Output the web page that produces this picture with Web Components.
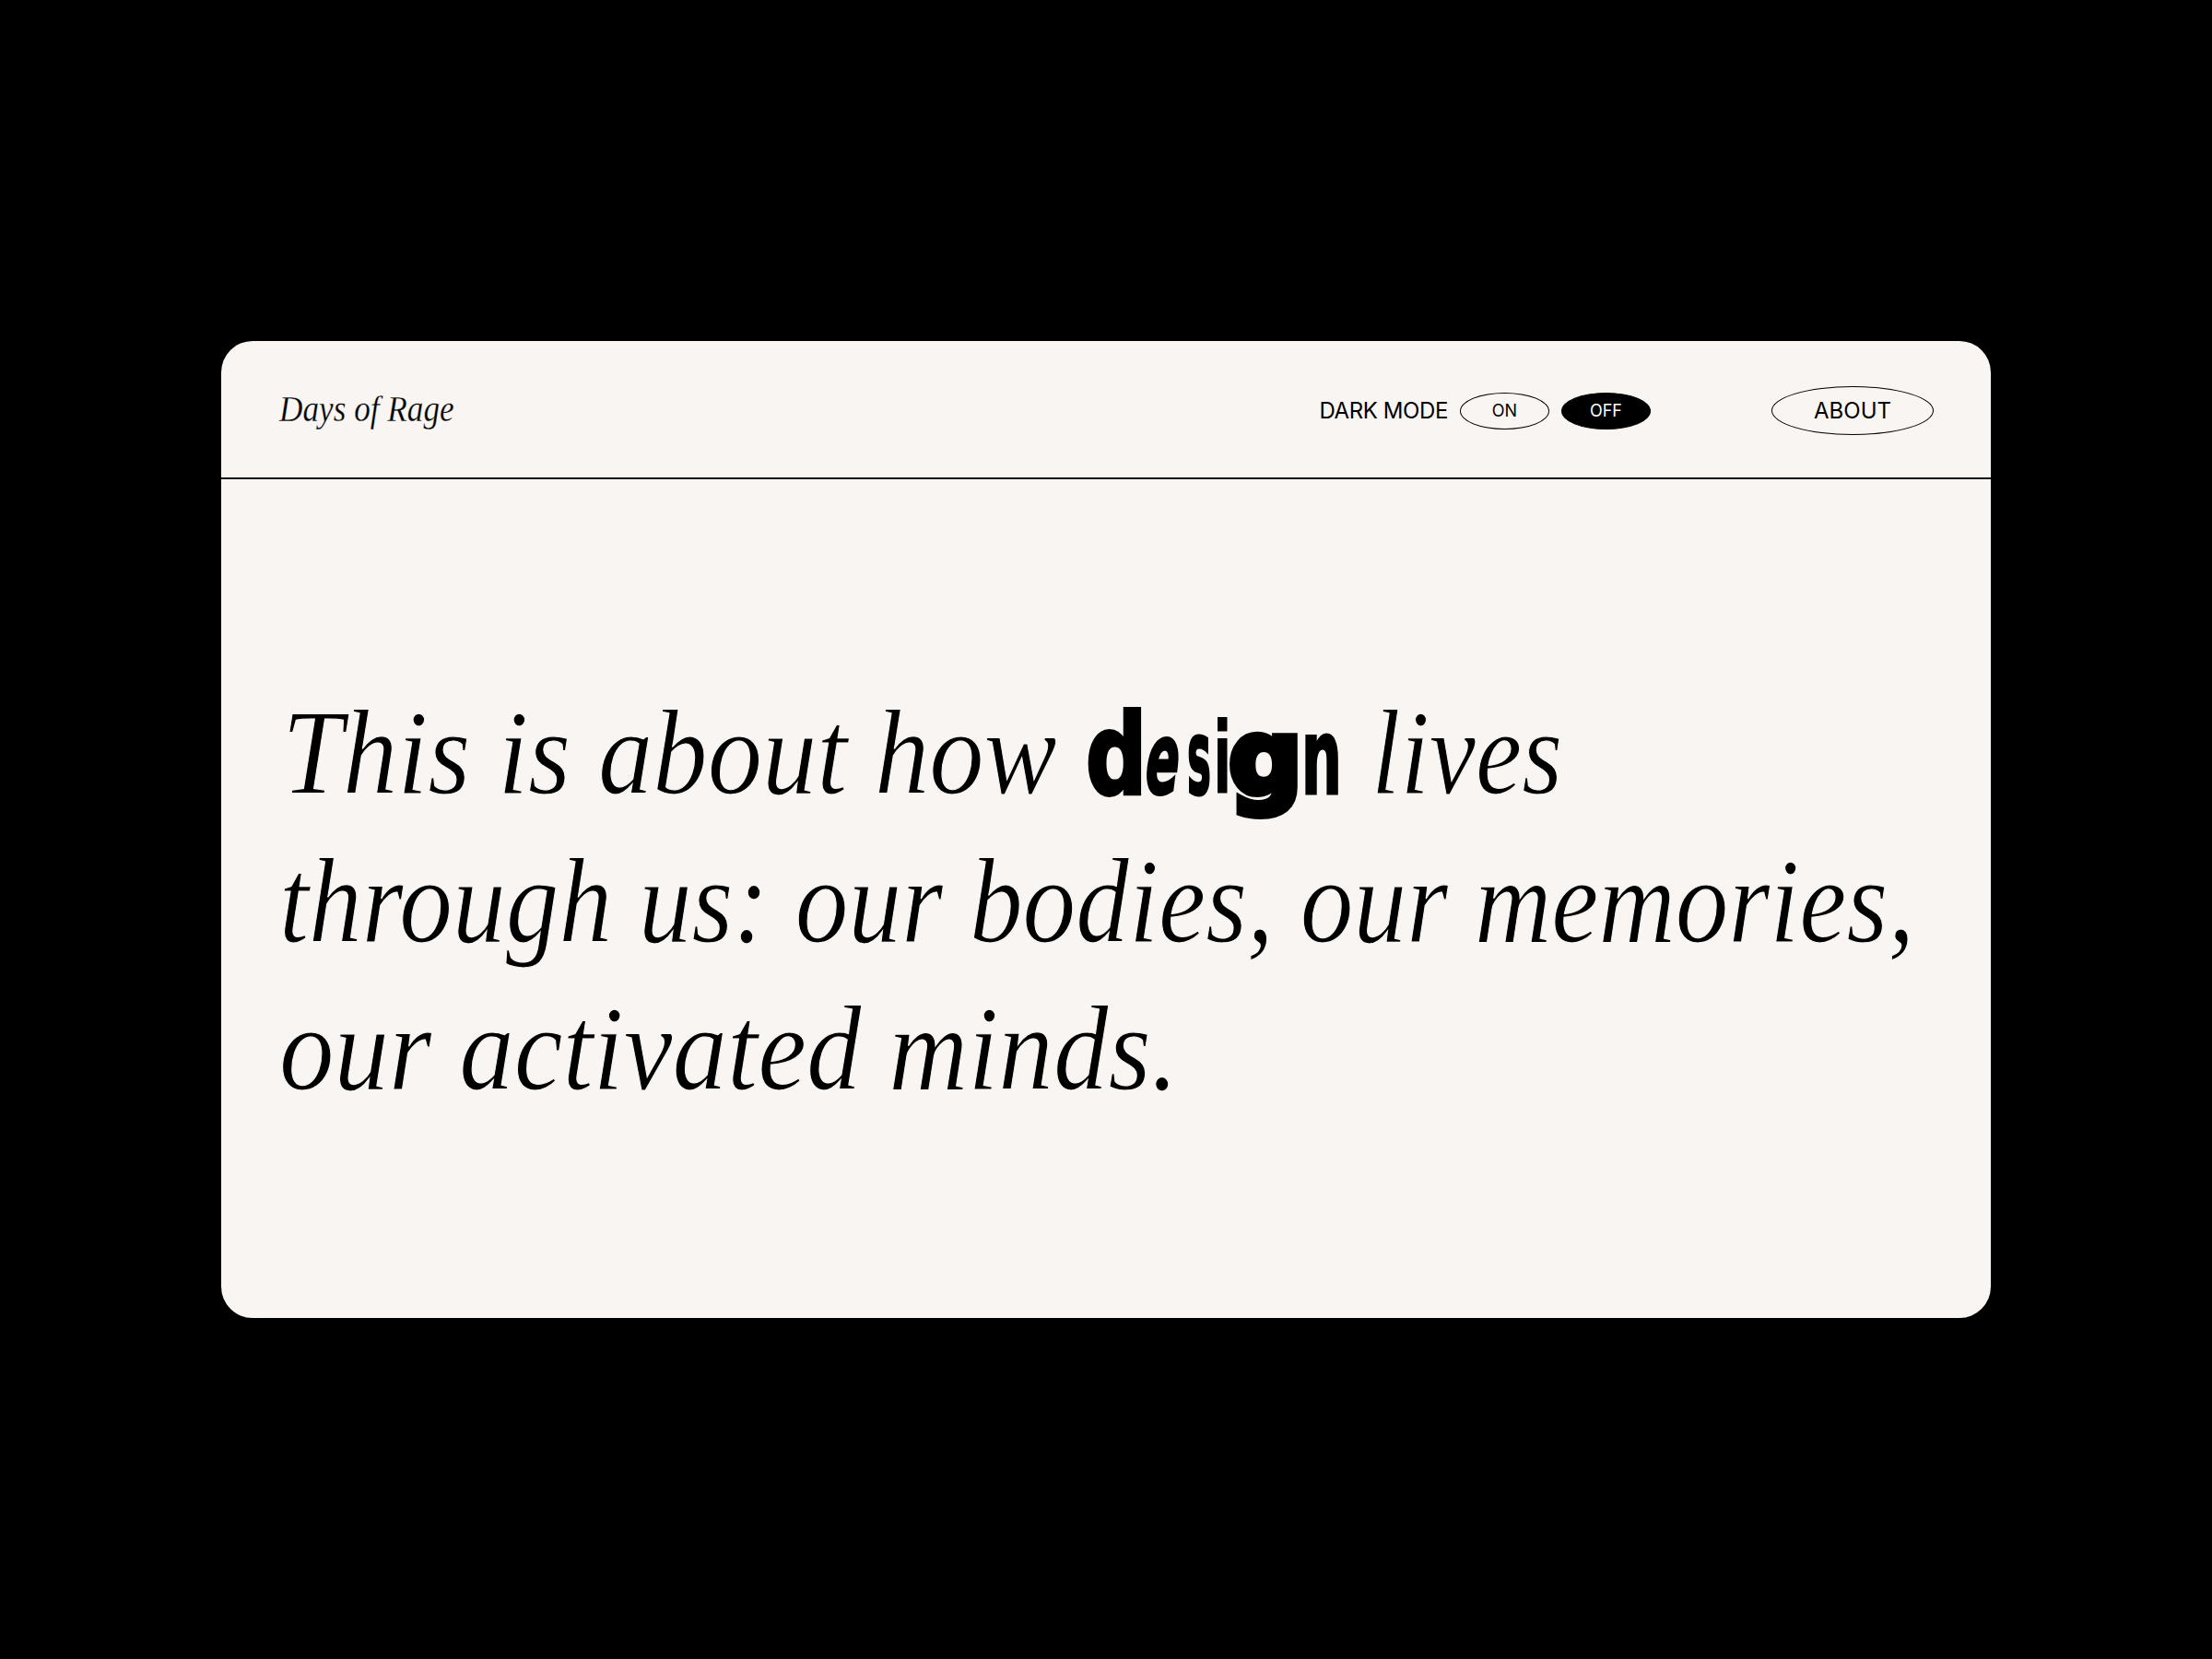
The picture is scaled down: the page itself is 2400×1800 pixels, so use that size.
<!DOCTYPE html>
<html lang="en">
<head>
<meta charset="utf-8">
<title>Days of Rage</title>
<style>
  html, body { margin: 0; height: 100%; background: #000; }
  body { display: flex; align-items: center; justify-content: center; min-height: 1800px; }
</style>
</head>
<body>
<rage-card>
  <rage-header slot="header"></rage-header>
  <rage-hero></rage-hero>
</rage-card>

<script>
class RageCard extends HTMLElement {
    constructor() {
        super();
        this.attachShadow({ mode: 'open' });
        this.shadowRoot.innerHTML = `
<style>
:host {
    display: flex;
    flex-direction: column;
    width: 1920px;
    height: 1060px;
    background: #f8f5f2;
    border-radius: 34px;
    overflow: hidden;
    color: #000;
}
</style>
<slot name="header"></slot>
<slot></slot>`;
    }
}

class PillLabel extends HTMLElement {
    constructor() {
        super();
        this.attachShadow({ mode: 'open' });
        this.shadowRoot.innerHTML = `
<style>
:host {
    display: flex;
    align-items: center;
    justify-content: center;
    box-sizing: border-box;
    width: 97px;
    height: 40px;
    border: 1.8px solid #000;
    border-radius: 50%;
    font: 400 18px/1 Inter, "Liberation Sans", sans-serif;
    color: #000;
}
:host([active]) {
    background: #000;
    color: #fff;
}
:host([large]) {
    width: 176px;
    height: 53px;
    font-size: 24px;
}
</style>
<slot></slot>`;
    }
}

class RageHeader extends HTMLElement {
    constructor() {
        super();
        this.attachShadow({ mode: 'open' });
        this.shadowRoot.innerHTML = `
<style>
:host {
    display: flex;
    align-items: center;
    box-sizing: border-box;
    height: 150px;
    padding: 3px 62px 0 63px;
    border-bottom: 2px solid #111;
}
.title {
    flex: 1;
    margin-top: -3px;
    font: italic 400 40px/1 "Liberation Serif", serif;
    transform: scaleX(.88);
    transform-origin: 0 50%;
    -webkit-text-stroke: .3px #f8f5f2;
}
.toggle {
    display: flex;
    align-items: center;
    gap: 13px;
    margin-right: 131px;
}
.toggle span {
    font: 400 24px/1 Inter, "Liberation Sans", sans-serif;
    letter-spacing: -.4px;
}
</style>
<div class="title">Days of Rage</div>
<div class="toggle">
    <span>DARK MODE</span>
    <pill-label>ON</pill-label>
    <pill-label active>OFF</pill-label>
</div>
<pill-label large>ABOUT</pill-label>`;
    }
}

class CutWord extends HTMLElement {
    constructor() {
        super();
        this.attachShadow({ mode: 'open' });
        this.shadowRoot.innerHTML = `
<style>
:host {
    display: inline-block;
    width: 271px;
    margin-left: -4px;
    font: normal 700 100px/0 "DejaVu Sans", sans-serif;
    white-space: nowrap;
    color: #000;
    -webkit-text-stroke: 0;
}
span {
    display: inline-block;
    transform-origin: 0 0;
    -webkit-text-stroke: 3px #000;
}
.d { font-size: 122px; width: 66px; transform: scaleX(.76); -webkit-text-stroke-width: 4px; }
.e { font-size: 108px; width: 44px; transform: scaleX(.5) skewX(-14deg); }
.s { font-size: 112px; width: 28px; transform: scaleX(.39); }
.i { font-size: 109px; width: 17px; transform: scaleX(.55); -webkit-text-stroke-width: 0; }
.g { font-size: 112px; width: 79px; transform: scaleX(1); -webkit-text-stroke-width: 8px; }
.n { font-size: 114px; width: 37px; transform: scaleX(.54); }
</style><span class="d">d</span><span class="e">e</span><span class="s">s</span><span class="i">i</span><span class="g">g</span><span class="n">n</span>`;
    }
}

class RageHero extends HTMLElement {
    constructor() {
        super();
        this.attachShadow({ mode: 'open' });
        this.shadowRoot.innerHTML = `
<style>
:host {
    display: block;
    padding: 217px 0 0 66px;
    font: italic 400 132px/160.5px "Liberation Serif", serif;
    color: #000;
}
.line { display: block; white-space: nowrap; transform-origin: 0 50%; }
.seg { display: inline-block; transform-origin: 0 50%; -webkit-text-stroke: 1.2px #f8f5f2; }
.lead { width: 876px; transform: scaleX(.899); }
.tail { margin-left: 39px; transform: scaleX(.857); }
.second { margin-left: -3px; transform: scaleX(.874); -webkit-text-stroke: 1.2px #f8f5f2; }
.third { margin-left: -3px; transform: scaleX(.902); -webkit-text-stroke: 1.2px #f8f5f2; }
</style>
<span class="line"><span class="seg lead">This is about how</span><cut-word>design</cut-word><span class="seg tail">lives</span></span>
<span class="line second">through us: our bodies, our memories,</span>
<span class="line third">our activated minds.</span>`;
    }
}

customElements.define('rage-card', RageCard);
customElements.define('pill-label', PillLabel);
customElements.define('rage-header', RageHeader);
customElements.define('cut-word', CutWord);
customElements.define('rage-hero', RageHero);
</script>
</body>
</html>
